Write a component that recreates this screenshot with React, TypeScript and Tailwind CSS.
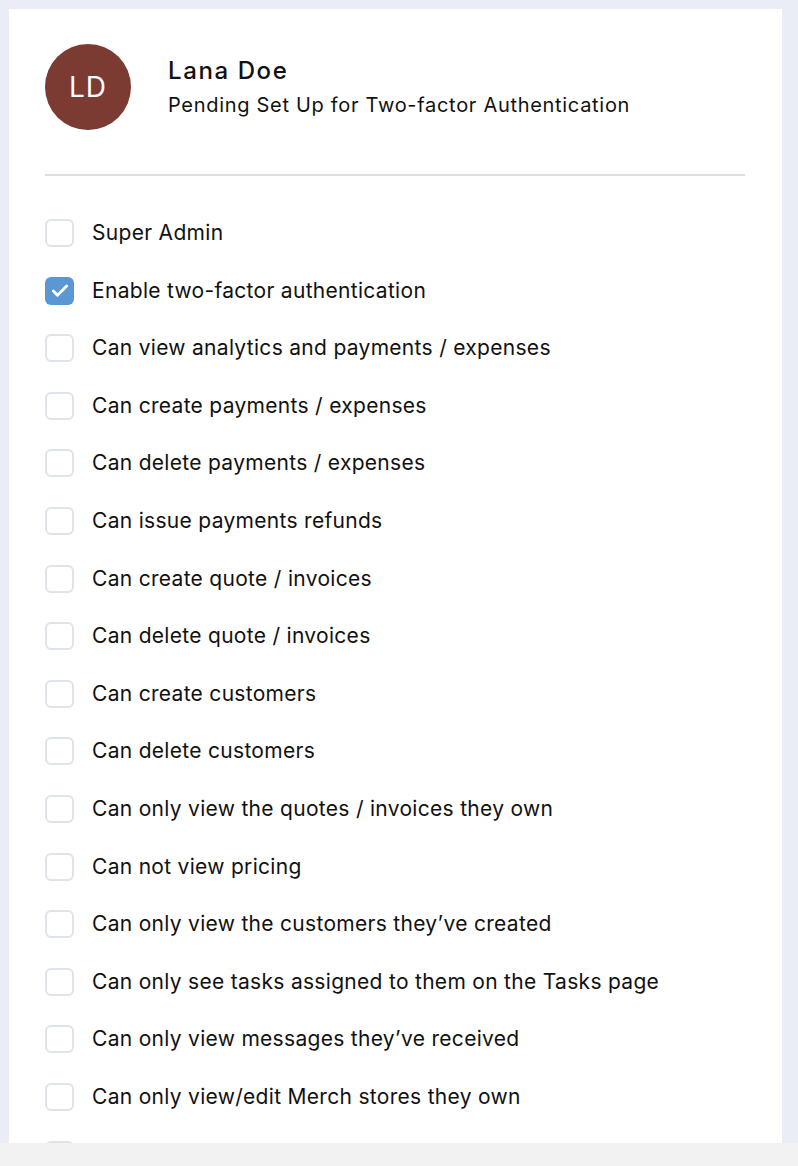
import { Check } from "lucide-react"

const permissions = [
  { label: "Super Admin", checked: false },
  { label: "Enable two-factor authentication", checked: true },
  { label: "Can view analytics and payments / expenses", checked: false },
  { label: "Can create payments / expenses", checked: false },
  { label: "Can delete payments / expenses", checked: false },
  { label: "Can issue payments refunds", checked: false },
  { label: "Can create quote / invoices", checked: false },
  { label: "Can delete quote / invoices", checked: false },
  { label: "Can create customers", checked: false },
  { label: "Can delete customers", checked: false },
  { label: "Can only view the quotes / invoices they own", checked: false },
  { label: "Can not view pricing", checked: false },
  { label: "Can only view the customers they’ve created", checked: false },
  { label: "Can only see tasks assigned to them on the Tasks page", checked: false },
  { label: "Can only view messages they’ve received", checked: false },
  { label: "Can only view/edit Merch stores they own", checked: false },
  { label: "", checked: false },
]

function Checkbox({ checked }: { checked: boolean }) {
  if (checked) {
    return (
      <div className="w-[29px] h-[28px] shrink-0 rounded-[6px] bg-[#5b97d2] flex items-center justify-center">
        <Check className="w-[20px] h-[20px] text-white" strokeWidth={3.5} />
      </div>
    )
  }
  return <div className="w-[29px] h-[28px] shrink-0 rounded-[6px] border-2 border-[#dfe3ea] bg-white" />
}

export default function App() {
  return (
    <div className="w-[798px] h-[1166px] bg-[#eaedf5] flex flex-col overflow-hidden font-['Inter',sans-serif] text-[#111]">
      <div className="flex-1 min-h-0 pt-[9px] pl-[9px] pr-[16px] flex">
        <div className="flex-1 bg-white overflow-hidden px-[36px] pt-[35px]">
          {/* header */}
          <div className="flex items-center gap-[37px]">
            <div className="w-[86px] h-[86px] rounded-full bg-[#7b3a32] flex items-center justify-center text-white text-[28px] tracking-[1px]">
              LD
            </div>
            <div>
              <div className="text-[24px] font-medium leading-[30px] tracking-[1.6px]">Lana Doe</div>
              <div className="text-[20px] leading-[28px] mt-[5px] tracking-[0.7px]">Pending Set Up for Two-factor Authentication</div>
            </div>
          </div>

          <div className="mt-[44px] border-t-2 border-[#d9dee4] w-[700px]" />

          <ul className="mt-[43px] flex flex-col gap-[29.6px]">
            {permissions.map((p, i) => (
              <li key={i} className="flex items-center gap-[18px] h-[28px]">
                <Checkbox checked={p.checked} />
                {p.label && <span className="text-[21px] leading-[28px] tracking-[0.3px] whitespace-nowrap">{p.label}</span>}
              </li>
            ))}
          </ul>
        </div>
      </div>
      <div className="h-[23px] bg-[#f2f2f2] shrink-0" />
    </div>
  )
}
